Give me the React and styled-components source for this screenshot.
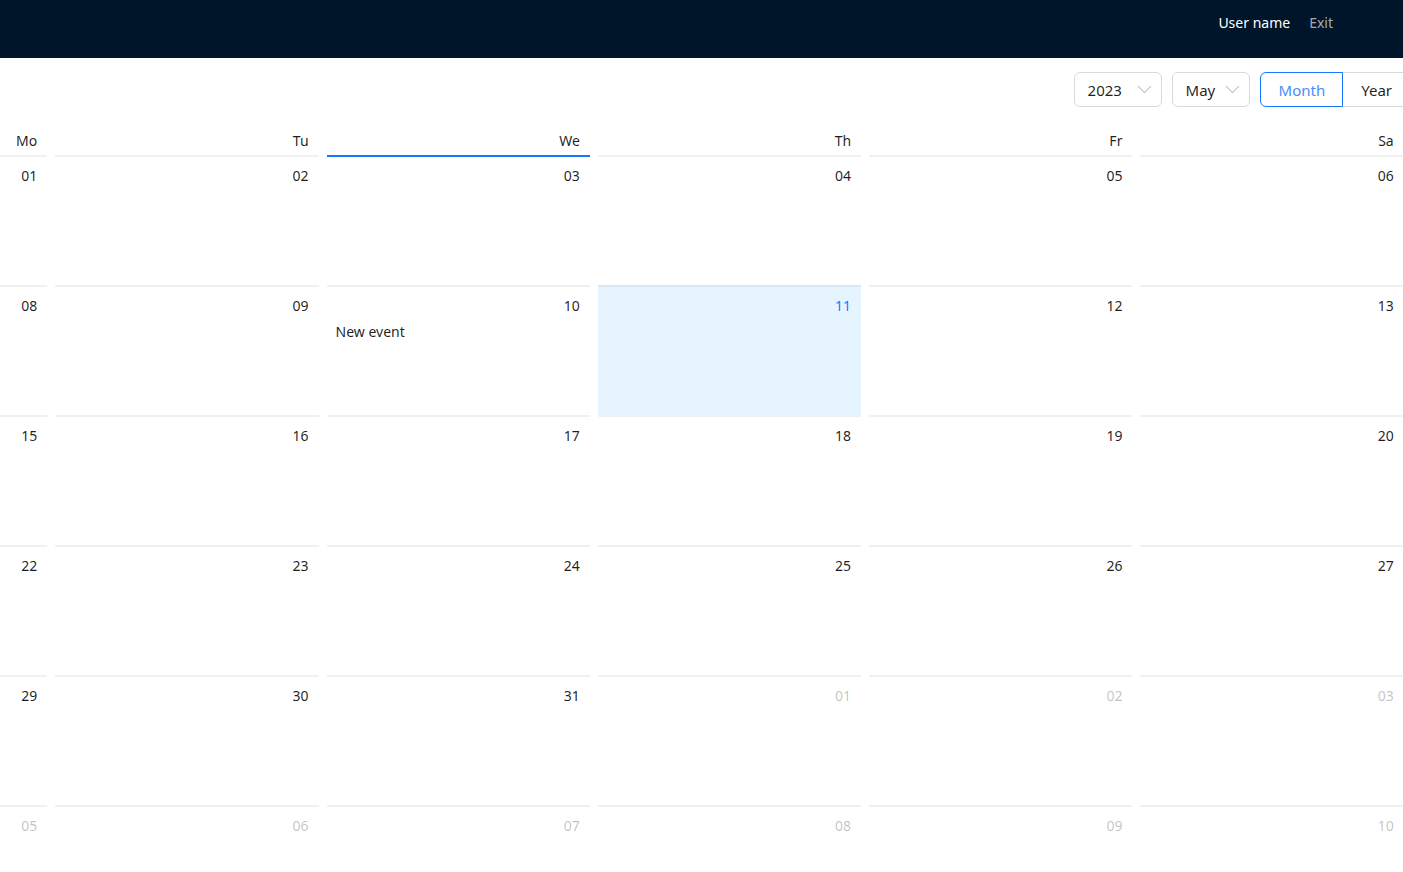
import React from "react";
import styled, { createGlobalStyle } from "styled-components";
import { ChevronDown } from "lucide-react";

const GlobalStyle = createGlobalStyle`
  body {
    margin: 0;
    font-family: "Noto Sans", "Open Sans", sans-serif;
    font-size: 14px;
    color: rgba(0, 0, 0, 0.88);
    background: #fff;
    overflow-x: hidden;
  }
`;

const Page = styled.div`
  width: 1403px;
  overflow: hidden;
`;

const TopBar = styled.header`
  height: 58px;
  background: #001529;
  display: flex;
  align-items: center;
  justify-content: flex-end;
  gap: 19px;
  padding: 0 70px 14px 0;
  box-sizing: border-box;
  font-size: 14px;
`;

const UserName = styled.span`
  color: #fff;
`;

const ExitLink = styled.a`
  color: rgba(255, 255, 255, 0.65);
  cursor: pointer;
`;

const Controls = styled.div`
  display: flex;
  justify-content: flex-end;
  align-items: center;
  gap: 10px;
  padding: 14px 0 25px;
  margin-right: -7px;
`;

const Select = styled.div`
  height: 35px;
  box-sizing: border-box;
  width: ${(p) => p.$w}px;
  border: 1px solid #d9d9d9;
  border-radius: 6px;
  display: flex;
  align-items: center;
  justify-content: space-between;
  padding: 0 4px 0 13px;
  font-size: 15px;
  color: rgba(0, 0, 0, 0.88);
  svg {
    color: rgba(0, 0, 0, 0.25);
  }
`;

const RadioGroup = styled.div`
  display: flex;
`;

const RadioButton = styled.div`
  height: 35px;
  box-sizing: border-box;
  display: flex;
  align-items: center;
  padding: 0 17px 0 18px;
  font-size: 15px;
  border: 1px solid ${(p) => (p.$active ? "#1677ff" : "#d9d9d9")};
  color: ${(p) => (p.$active ? "#4a8dff" : "rgba(0, 0, 0, 0.88)")};
  border-radius: ${(p) => (p.$first ? "6px 0 0 6px" : "0 6px 6px 0")};
  margin-left: ${(p) => (p.$first ? 0 : -1)}px;
  z-index: ${(p) => (p.$active ? 1 : 0)};
  background: #fff;
`;

const Grid = styled.div`
  margin-left: -220px;
  width: 1899px;
  display: grid;
  grid-template-columns: repeat(7, 1fr);
`;

const DayHead = styled.div`
  text-align: right;
  padding: 0 10px 5px 0;
  margin: 0 4px;
  line-height: 18px;
  font-size: 14px;
`;

const Cell = styled.div`
  margin: 0 4px;
  height: 130px;
  box-sizing: border-box;
  padding: 7px 8px 0;
  border-top: 2px solid
    ${(p) => (p.$today ? "#1677ff" : p.$selected ? "#dbe7f3" : "#f0f0f0")};
  background: ${(p) => (p.$selected ? "#e6f4ff" : "transparent")};
`;

const DateValue = styled.div`
  text-align: right;
  line-height: 24px;
  padding-right: 2px;
  color: ${(p) =>
    p.$selected ? "#1677ff" : p.$other ? "rgba(0, 0, 0, 0.25)" : "rgba(0, 0, 0, 0.88)"};
`;

const EventText = styled.div`
  margin-top: 3px;
  line-height: 22px;
  padding-left: 1px;
`;

const heads = ["Mo", "Tu", "We", "Th", "Fr", "Sa", "Su"];

function buildDays() {
  const days = [];
  for (let i = 0; i < 42; i++) {
    if (i < 31) days.push({ d: i + 1, other: false });
    else days.push({ d: i - 30, other: true });
  }
  return days;
}

const pad = (n) => String(n).padStart(2, "0");

export default function App() {
  const days = buildDays();
  return (
    <Page>
      <GlobalStyle />
      <TopBar>
        <UserName>User name</UserName>
        <ExitLink>Exit</ExitLink>
      </TopBar>
      <Controls>
        <Select $w={88}>
          2023 <ChevronDown size={25} strokeWidth={1} />
        </Select>
        <Select $w={78}>
          May <ChevronDown size={25} strokeWidth={1} />
        </Select>
        <RadioGroup>
          <RadioButton $first $active>
            Month
          </RadioButton>
          <RadioButton>Year</RadioButton>
        </RadioGroup>
      </Controls>
      <Grid>
        {heads.map((h) => (
          <DayHead key={h}>{h}</DayHead>
        ))}
        {days.map((day, i) => {
          const today = !day.other && day.d === 3;
          const selected = !day.other && day.d === 11;
          return (
            <Cell key={i} $today={today} $selected={selected}>
              <DateValue $selected={selected} $other={day.other}>
                {pad(day.d)}
              </DateValue>
              {!day.other && day.d === 10 && <EventText>New event</EventText>}
            </Cell>
          );
        })}
      </Grid>
    </Page>
  );
}
